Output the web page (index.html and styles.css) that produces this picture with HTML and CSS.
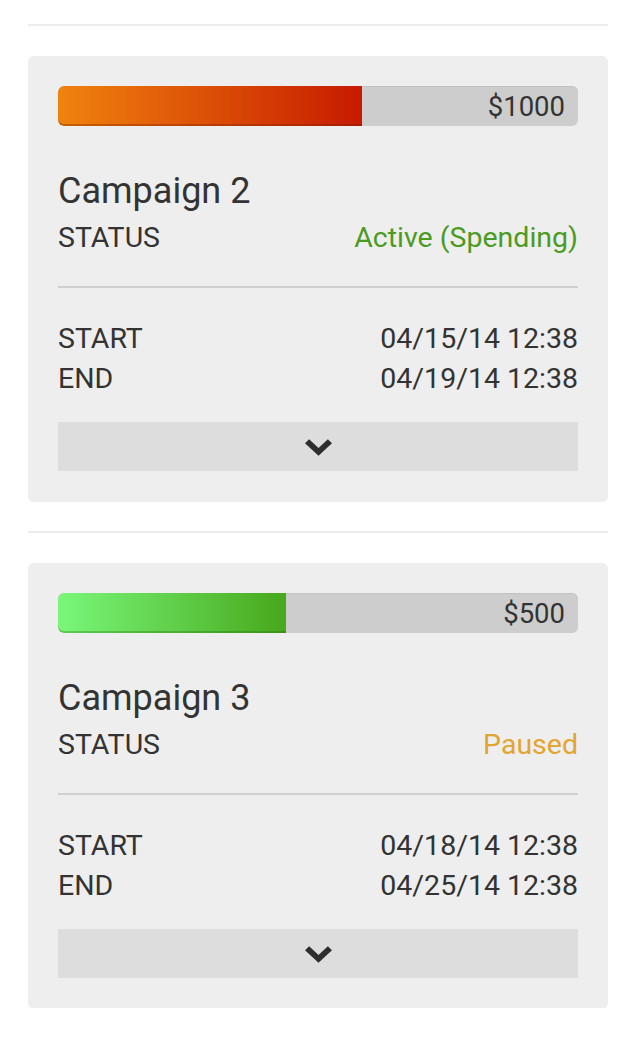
FILE: index.html
```html
<!DOCTYPE html>
<html>
<head>
<meta charset="utf-8">
<link rel="stylesheet" href="styles.css">
</head>
<body>
<div class="list">
  <div class="rule"></div>
  <div class="card">
    <div class="budget">
      <div class="fill fill-orange" style="width:58.5%"></div>
      <span class="amount">$1000</span>
    </div>
    <div class="title">Campaign 2</div>
    <div class="row status-row"><span>STATUS</span><span class="st-active">Active (Spending)</span></div>
    <div class="sep"></div>
    <div class="row"><span>START</span><span>04/15/14 12:38</span></div>
    <div class="row"><span>END</span><span>04/19/14 12:38</span></div>
    <div class="expand"><svg width="27" height="17" viewBox="0 0 26 16"><polygon points="0,4 4,0 13,8.4 22,0 26,4 13,16" fill="#2e2e2e"/></svg></div>
  </div>
  <div class="rule"></div>
  <div class="card">
    <div class="budget">
      <div class="fill fill-green" style="width:43.8%"></div>
      <span class="amount">$500</span>
    </div>
    <div class="title">Campaign 3</div>
    <div class="row status-row"><span>STATUS</span><span class="st-paused">Paused</span></div>
    <div class="sep"></div>
    <div class="row"><span>START</span><span>04/18/14 12:38</span></div>
    <div class="row"><span>END</span><span>04/25/14 12:38</span></div>
    <div class="expand"><svg width="27" height="17" viewBox="0 0 26 16"><polygon points="0,4 4,0 13,8.4 22,0 26,4 13,16" fill="#2e2e2e"/></svg></div>
  </div>
</div>
</body>
</html>
```

FILE: styles.css
```css
html, body {
  margin: 0;
  padding: 0;
  background: #ffffff;
}
body {
  font-family: Roboto, "Liberation Sans", sans-serif;
  color: #333333;
}
.list {
  display: flex;
  flex-direction: column;
  gap: 30px;
  padding: 24px 24px 0 28px;
}
.rule {
  height: 2px;
  background: #ececec;
}
.card {
  background: #eeeeee;
  border-radius: 6px;
  box-shadow: 0 1px 1px rgba(0,0,0,0.07);
  padding: 30px 30px 30px 30px;
  display: flex;
  flex-direction: column;
}
.budget {
  position: relative;
  height: 40px;
  background: #cdcdcd;
  border-radius: 6px;
  box-shadow: inset 0 1px 1px rgba(0,0,0,0.06);
  display: flex;
  align-items: center;
  justify-content: flex-end;
  overflow: hidden;
}
.fill {
  position: absolute;
  left: 0;
  top: 0;
  bottom: 0;
  border-radius: 6px 0 0 6px;
}
.fill-orange {
  background: linear-gradient(to right, #f0830e, #c71a00);
  box-shadow: inset 0 -2px 0 rgba(120,30,0,0.35);
}
.fill-green {
  background: linear-gradient(to right, #7af77a, #47a81b);
  box-shadow: inset 0 -2px 0 rgba(30,100,10,0.3);
}
.amount {
  position: relative;
  font-size: 27.5px;
  padding-right: 13px;
  color: #333333;
}
.title {
  margin-top: 44px;
  font-size: 36px;
  line-height: 42px;
  color: #333333;
}
.row {
  display: flex;
  justify-content: space-between;
  font-size: 28.5px;
  line-height: 40px;
}
.status-row {
  margin-top: 9px;
  line-height: 34px;
}
.st-active {
  color: #4b9b1f;
}
.st-paused {
  color: #e2a52f;
}
.sep {
  height: 2px;
  background: #d0d0d0;
  margin: 31px 0 31px 0;
}
.expand {
  margin-top: 23px;
  height: 49px;
  background: #dddddd;
  display: flex;
  align-items: center;
  justify-content: center;
}
.expand svg {
  display: block;
  margin-top: 2px;
}
```
